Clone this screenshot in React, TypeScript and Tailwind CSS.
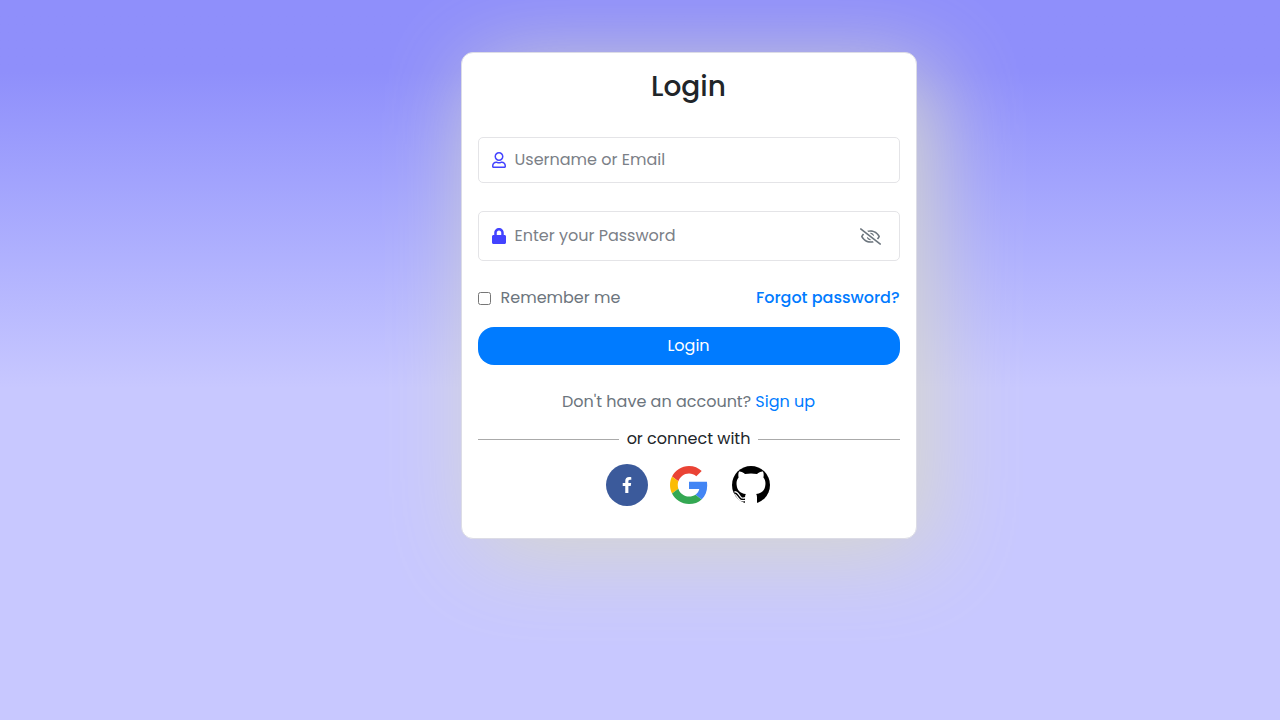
import { useState } from "react";
import { FaFacebookF, FaLock, FaRegEyeSlash, FaRegUser } from "react-icons/fa";

function GoogleLogo() {
  return (
    <svg viewBox="0 0 48 48" className="size-[38px]" aria-hidden="true">
      <path
        fill="#EA4335"
        d="M24 9.5c3.54 0 6.71 1.22 9.21 3.6l6.85-6.85C35.9 2.38 30.47 0 24 0 14.62 0 6.51 5.38 2.56 13.22l7.98 6.19C12.43 13.72 17.74 9.5 24 9.5z"
      />
      <path
        fill="#4285F4"
        d="M46.98 24.55c0-1.57-.15-3.09-.38-4.55H24v9.02h12.94c-.58 2.96-2.26 5.48-4.78 7.18l7.73 6c4.51-4.18 7.09-10.36 7.09-17.65z"
      />
      <path
        fill="#FBBC05"
        d="M10.53 28.59c-.48-1.45-.76-2.99-.76-4.59s.27-3.14.76-4.59l-7.98-6.19C.92 16.46 0 20.12 0 24c0 3.88.92 7.54 2.56 10.78l7.97-6.19z"
      />
      <path
        fill="#34A853"
        d="M24 48c6.48 0 11.93-2.13 15.89-5.81l-7.73-6c-2.15 1.45-4.92 2.3-8.16 2.3-6.26 0-11.57-4.22-13.47-9.91l-7.98 6.19C6.51 42.62 14.62 48 24 48z"
      />
    </svg>
  );
}

function GithubLogo() {
  return (
    <svg viewBox="0 0 38 38" className="size-[38px]" aria-hidden="true">
      <circle cx="19" cy="19" r="19" fill="#000" />
      <path
        fill="#fff"
        d="M7 5.5c2-.3 4.200 1 6 2.600 4-.9 8-.9 12 0 1.800-1.600 4-2.900 6-2.600.9 2.200.8 4.400.4 6 1.700 2 2.300 4.200 2 7.200-.5 5.600-3.400 8.600-9.200 9.300.6 1 .8 2 .8 3.400V38H13V31.400c0-1.400.3-2.500.8-3.400-5.800-.7-8.700-3.700-9.200-9.300-.3-3 .3-5.200 2-7.200-.4-1.600-.5-4 .4-6z"
      />
      {/* tail */}
      <path
        fill="none"
        stroke="#fff"
        strokeWidth="4"
        d="M2.500 27c3.500 0 3.500 4.500 6.500 6 1.500.7 3 .5 5 0"
      />
      <path
        fill="none"
        stroke="#000"
        strokeWidth="1.4"
        d="M2.500 27c3.500 0 3.500 4.500 6.500 6 1.500.7 2.500.5 4 .2"
      />
    </svg>
  );
}

export default function App() {
  const [username, setUsername] = useState("");
  const [password, setPassword] = useState("");
  const [showPassword, setShowPassword] = useState(false);
  const [remember, setRemember] = useState(false);

  return (
    <main className="min-h-screen bg-linear-to-b from-[#8f8ffb] from-10% to-[#c8c8ff] to-54% pt-[52px] pb-8 pl-[97px] font-['Poppins','Inter',sans-serif] text-base leading-6 text-[#212529]">
      <section className="mx-auto w-full max-w-[456px] rounded-xl border border-[#dcdce6] bg-white px-4 pt-4 pb-8 shadow-[15px_15px_90px_#d8d8cc]">
        <h1 className="text-center text-[28px] leading-9 font-medium">Login</h1>

        <form onSubmit={(e) => e.preventDefault()}>
          <div className="mt-8 flex h-[46px] items-center gap-2 rounded-[5px] border border-[#e4e4e7] px-3">
            <FaRegUser className="w-4 shrink-0 text-[#4343ff]" />
            <input
              type="text"
              aria-label="Username or Email"
              placeholder="Username or Email"
              value={username}
              onChange={(e) => setUsername(e.target.value)}
              className="min-w-0 flex-1 outline-none placeholder:text-[#7b8087]"
            />
          </div>

          <div className="mt-7 flex h-[50px] items-center gap-2 rounded-[5px] border border-[#e4e4e7] px-3">
            <FaLock className="w-4 shrink-0 text-[#4343ff]" />
            <input
              type={showPassword ? "text" : "password"}
              aria-label="Enter your Password"
              placeholder="Enter your Password"
              value={password}
              onChange={(e) => setPassword(e.target.value)}
              className="min-w-0 flex-1 outline-none placeholder:text-[#7b8087]"
            />
            <button
              type="button"
              aria-label="Show password"
              onClick={() => setShowPassword(!showPassword)}
              className="px-1.5 text-[#6c757d]"
            >
              <FaRegEyeSlash className="h-[17px] w-[21px]" />
            </button>
          </div>

          <div className="mt-[25px] flex items-center justify-between">
            <label className="flex items-center gap-2.5 text-[#6c757d]">
              <input
                type="checkbox"
                checked={remember}
                onChange={(e) => setRemember(e.target.checked)}
                className="size-[13px]"
              />
              Remember me
            </label>
            <a href="#" className="font-medium text-[#007bff]">
              Forgot password?
            </a>
          </div>

          <button
            type="submit"
            className="mt-[17px] h-[38px] w-full rounded-2xl bg-[#007bff] text-white"
          >
            Login
          </button>
        </form>

        <p className="mt-[25px] text-center text-[#6c757d]">
          Don't have an account?{" "}
          <a href="#" className="text-[#007bff]">
            Sign up
          </a>
        </p>

        <div className="mt-[13px] flex items-center gap-2">
          <span className="h-px flex-1 bg-[#aaaaaa]" />
          <span>or connect with</span>
          <span className="h-px flex-1 bg-[#aaaaaa]" />
        </div>

        <div className="mt-[13px] flex items-center justify-center gap-5">
          <a
            href="#"
            aria-label="Facebook"
            className="flex size-[42px] items-center justify-center rounded-full bg-[#3b5a9b] text-white"
          >
            <FaFacebookF className="size-4" />
          </a>
          <a
            href="#"
            aria-label="Google"
            className="flex size-[42px] items-center justify-center"
          >
            <GoogleLogo />
          </a>
          <a
            href="#"
            aria-label="GitHub"
            className="flex size-[42px] items-center justify-center"
          >
            <GithubLogo />
          </a>
        </div>
      </section>
    </main>
  );
}
